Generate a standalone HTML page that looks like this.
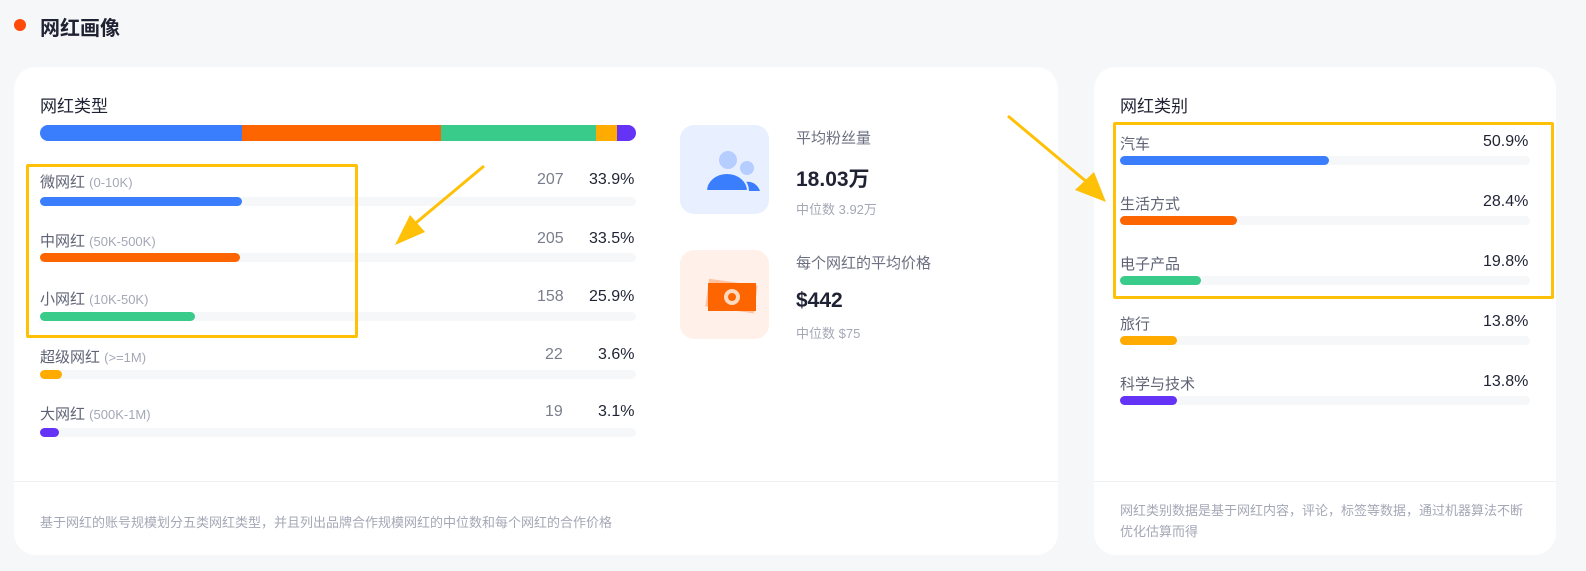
<!DOCTYPE html><html><head><meta charset="utf-8"><style>
html,body{margin:0;overflow:hidden}
body{width:1586px;height:571px;background:#f6f7f9;font-family:"Liberation Sans","Noto Sans CJK SC",sans-serif;position:relative}
.a{position:absolute}
.card{position:absolute;background:#fff;border-radius:22px}
.lbl{font-size:15px;color:#5f6375}
.lbl span{color:#a4a8b6;font-size:13px}
.track{position:absolute;height:9px;border-radius:5px;background:#f6f7f9}
.fill{position:absolute;left:0;top:0;height:9px;border-radius:5px}
.num{font-size:16px;color:#7a7e8c}
.pct{font-size:16px;color:#1f2233}
</style></head><body>
<div class="a" style="left:14px;top:19px;width:12px;height:12px;border-radius:50%;background:#ff4a0a"></div>
<div class="a" style="left:40px;top:12px;font-size:20px;font-weight:bold;color:#1f2233">网红画像</div>

<div class="card" style="left:14px;top:67px;width:1044px;height:488px">
<div class="a" style="left:0;top:414px;width:1044px;height:1px;background:#eef0f3"></div>
<div class="a" style="left:26px;top:445px;font-size:13px;color:#a4a8b6">基于网红的账号规模划分五类网红类型，并且列出品牌合作规模网红的中位数和每个网红的合作价格</div>
</div>
<div class="a" style="left:40px;top:92px;font-size:17px;color:#1f2233">网红类型</div>
<div class="a" style="left:40px;top:125px;width:596px;height:16px;border-radius:8px;overflow:hidden;display:flex">
<div style="width:202px;background:#3a7efe"></div><div style="width:199px;background:#fd6500"></div><div style="width:155px;background:#39cb8a"></div><div style="width:21px;background:#ffab00"></div><div style="flex:1;background:#6433f5"></div></div>

<div class="a lbl" style="left:40px;top:171px">微网红 <span>(0-10K)</span></div>
<div class="a num" style="left:537px;top:171px">207</div><div class="a pct" style="left:589px;top:171px">33.9%</div>
<div class="track" style="left:40px;top:197px;width:596px"><div class="fill" style="width:202px;background:#3a7efe"></div></div>

<div class="a lbl" style="left:40px;top:230px">中网红 <span>(50K-500K)</span></div>
<div class="a num" style="left:537px;top:230px">205</div><div class="a pct" style="left:589px;top:230px">33.5%</div>
<div class="track" style="left:40px;top:253px;width:596px"><div class="fill" style="width:200px;background:#fd6500"></div></div>

<div class="a lbl" style="left:40px;top:288px">小网红 <span>(10K-50K)</span></div>
<div class="a num" style="left:537px;top:288px">158</div><div class="a pct" style="left:589px;top:288px">25.9%</div>
<div class="track" style="left:40px;top:312px;width:596px"><div class="fill" style="width:155px;background:#39cb8a"></div></div>

<div class="a lbl" style="left:40px;top:346px">超级网红 <span>(&gt;=1M)</span></div>
<div class="a num" style="left:545px;top:346px">22</div><div class="a pct" style="left:598px;top:346px">3.6%</div>
<div class="track" style="left:40px;top:370px;width:596px"><div class="fill" style="width:22px;background:#ffab00"></div></div>

<div class="a lbl" style="left:40px;top:403px">大网红 <span>(500K-1M)</span></div>
<div class="a num" style="left:545px;top:403px">19</div><div class="a pct" style="left:598px;top:403px">3.1%</div>
<div class="track" style="left:40px;top:428px;width:596px"><div class="fill" style="width:19px;background:#6433f5"></div></div>

<div class="a" style="left:26px;top:164px;width:326px;height:168px;border:3px solid #ffc107;border-radius:2px"></div>

<div class="a" style="left:680px;top:125px;width:89px;height:89px;border-radius:14px;background:#e8f0ff">
<svg width="89" height="89"><circle cx="48" cy="35" r="9" fill="#b5cdff"/><circle cx="67" cy="43" r="7" fill="#b5cdff"/><path d="M56 66 A13 15 0 0 1 80 66 Z" fill="#3a7efe"/><path d="M26 66 A21 18 0 0 1 68 66 Z" fill="#3a7efe" stroke="#e8f0ff" stroke-width="2"/><rect x="20" y="67" width="66" height="6" fill="#e8f0ff"/></svg></div>
<div class="a" style="left:796px;top:127px;font-size:15px;color:#6b6f80">平均粉丝量</div>
<div class="a" style="left:796px;top:163px;font-size:21px;font-weight:bold;color:#1f2233">18.03万</div>
<div class="a" style="left:796px;top:199px;font-size:13px;color:#a4a8b6">中位数 3.92万</div>

<div class="a" style="left:680px;top:250px;width:89px;height:89px;border-radius:14px;background:#fff1e9">
<svg width="89" height="89"><rect x="27" y="32" width="49" height="28" fill="#ffc2a0" transform="rotate(8 51 46)"/><rect x="28" y="33" width="48" height="28" fill="#fd6500"/><circle cx="52" cy="47" r="8" fill="#ffd8c0"/><circle cx="52" cy="47" r="4" fill="#fd6500"/></svg></div>
<div class="a" style="left:796px;top:252px;font-size:15px;color:#6b6f80">每个网红的平均价格</div>
<div class="a" style="left:796px;top:289px;font-size:21px;font-weight:bold;color:#1f2233">$442</div>
<div class="a" style="left:796px;top:323px;font-size:13px;color:#a4a8b6">中位数 $75</div>

<div class="card" style="left:1094px;top:67px;width:462px;height:488px">
<div class="a" style="left:0;top:414px;width:462px;height:1px;background:#eef0f3"></div>
<div class="a" style="left:26px;top:433px;width:410px;font-size:13px;line-height:21px;color:#a4a8b6">网红类别数据是基于网红内容，评论，标签等数据，通过机器算法不断优化估算而得</div>
</div>
<div class="a" style="left:1120px;top:92px;font-size:17px;color:#1f2233">网红类别</div>

<div class="a lbl" style="left:1120px;top:133px">汽车</div><div class="a pct" style="left:1483px;top:133px">50.9%</div>
<div class="track" style="left:1120px;top:156px;width:410px"><div class="fill" style="width:209px;background:#3a7efe"></div></div>
<div class="a lbl" style="left:1120px;top:193px">生活方式</div><div class="a pct" style="left:1483px;top:193px">28.4%</div>
<div class="track" style="left:1120px;top:216px;width:410px"><div class="fill" style="width:117px;background:#fd6500"></div></div>
<div class="a lbl" style="left:1120px;top:253px">电子产品</div><div class="a pct" style="left:1483px;top:253px">19.8%</div>
<div class="track" style="left:1120px;top:276px;width:410px"><div class="fill" style="width:81px;background:#39cb8a"></div></div>
<div class="a lbl" style="left:1120px;top:313px">旅行</div><div class="a pct" style="left:1483px;top:313px">13.8%</div>
<div class="track" style="left:1120px;top:336px;width:410px"><div class="fill" style="width:57px;background:#ffab00"></div></div>
<div class="a lbl" style="left:1120px;top:373px">科学与技术</div><div class="a pct" style="left:1483px;top:373px">13.8%</div>
<div class="track" style="left:1120px;top:396px;width:410px"><div class="fill" style="width:57px;background:#6433f5"></div></div>

<div class="a" style="left:1113px;top:122px;width:435px;height:171px;border:3px solid #ffc107;border-radius:2px"></div>

<svg class="a" style="left:0;top:0" width="1586" height="571">
<path d="M484 166 L405 232" stroke="#ffc107" stroke-width="3"/>
<path d="M395 245 L410 215 L425 232 Z" fill="#ffc107"/>
<path d="M1008 116 L1094 188" stroke="#ffc107" stroke-width="3"/>
<path d="M1106 202 L1075 190 L1094 172 Z" fill="#ffc107"/>
</svg>
</body></html>
